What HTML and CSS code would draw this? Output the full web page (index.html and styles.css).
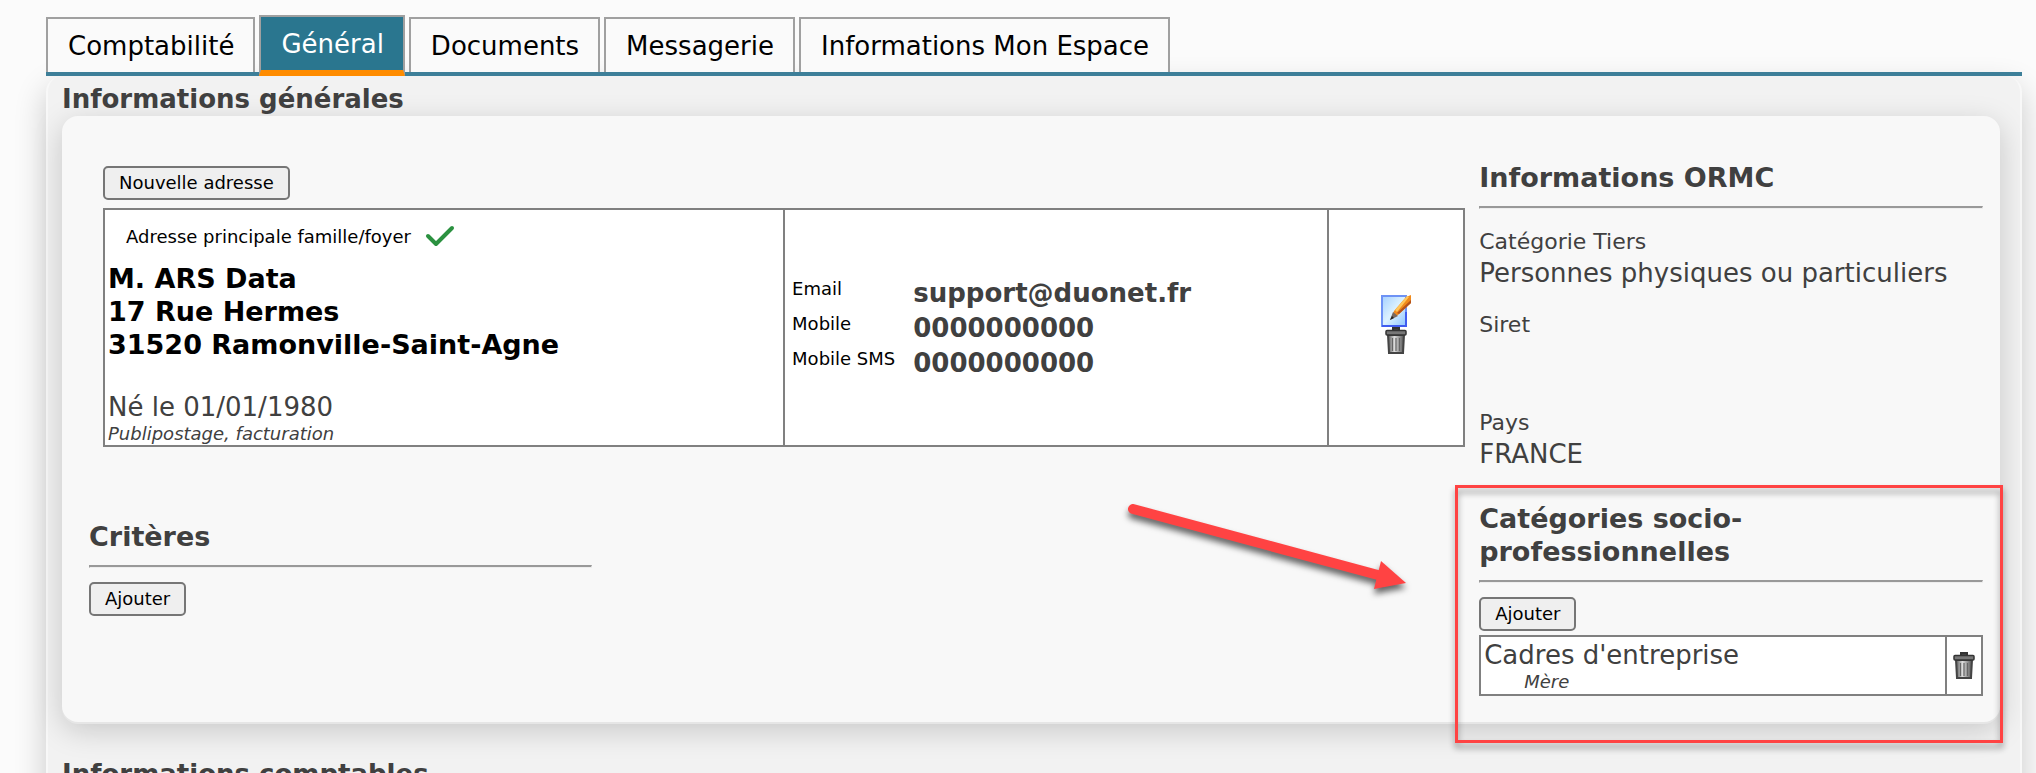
FILE: index.html
```html
<!DOCTYPE html>
<html lang="fr">
<head>
  <meta charset="UTF-8" />
  <meta name="viewport" content="width=device-width, initial-scale=1.0"/>
  <title>Fiche tiers</title>
  <link rel="stylesheet" href="styles.css">
</head>
<body>

  <svg class="defs" width="0" height="0" aria-hidden="true">
    <defs>
      <linearGradient id="bin" x1="0" x2="1" y1="0" y2="0">
        <stop offset="0" stop-color="#555"/>
        <stop offset="0.4" stop-color="#ddd"/>
        <stop offset="1" stop-color="#555"/>
      </linearGradient>
      <linearGradient id="sheet" x1="0" x2="1" y1="0" y2="1">
        <stop offset="0" stop-color="#a5d0ff"/>
        <stop offset="0.5" stop-color="#dcf2ff"/>
        <stop offset="1" stop-color="#8cc4ff"/>
      </linearGradient>
      <symbol id="trash" viewBox="0 0 24 28">
        <path d="M9 3V1h6v2" fill="#444" stroke="#333" stroke-width="2"/>
        <path d="M4 8h16l-1 18H5z" fill="url(#bin)" stroke="#444" stroke-width="2"/>
        <path d="M8.500 11v13M12 11v13M15.500 11v13" stroke="#666" stroke-width="1.200"/>
        <rect x="2" y="3.500" width="20" height="4.500" rx="1" fill="#777" stroke="#333" stroke-width="1.500"/>
      </symbol>
      <symbol id="edit" viewBox="0 0 30 32">
        <rect x="1" y="1" width="24" height="30" fill="url(#sheet)" stroke="#6d92f5" stroke-width="2"/>
        <path d="M1 31h24V17" fill="none" stroke="#3f5cf0" stroke-width="2"/>
        <path d="M10 24l3-8L25 2l5-2v8L17 20z" fill="#f08a1c"/>
        <path d="M14 15L26 1l2 1-12 15z" fill="#ffc65c"/>
        <path d="M18 19L30 8V5L16 18z" fill="#b4521c"/>
        <path d="M9 25l3-8 5 4z" fill="#7a6a60"/>
        <path d="M9 25l2-4 2 2z" fill="#222"/>
      </symbol>
    </defs>
  </svg>

  <nav class="tabs">
    <button class="tab">Comptabilité</button>
    <button class="tab active">Général</button>
    <button class="tab">Documents</button>
    <button class="tab">Messagerie</button>
    <button class="tab">Informations Mon Espace</button>
  </nav>

  <main class="panel">
    <h2>Informations générales</h2>
    <div class="card">
      <div class="left">
        <section class="addresses">
          <button class="btn">Nouvelle adresse</button>
          <table class="grid-table address-table">
            <tbody>
              <tr>
                <td class="col-address">
                  <div class="main-address">
                    <span>Adresse principale famille/foyer</span>
                    <svg class="check" viewBox="0 0 30 22" aria-hidden="true">
                      <path d="M3 11l8 8L27 3" fill="none" stroke="#2b9140" stroke-width="4" stroke-linecap="round" stroke-linejoin="round"/>
                    </svg>
                  </div>
                  <address>
                    M. ARS Data<br>
                    17 Rue Hermes<br>
                    31520 Ramonville-Saint-Agne
                  </address>
                  <div class="birth">Né le 01/01/1980</div>
                  <div class="note">Publipostage, facturation</div>
                </td>
                <td class="col-contact">
                  <dl class="contact">
                    <dt>Email</dt>
                    <dd>support@duonet.fr</dd>
                    <dt>Mobile</dt>
                    <dd>0000000000</dd>
                    <dt>Mobile SMS</dt>
                    <dd>0000000000</dd>
                  </dl>
                </td>
                <td class="col-actions">
                  <button class="icon-btn" aria-label="Modifier"><svg class="edit-icon"><use href="#edit"/></svg></button>
                  <button class="icon-btn" aria-label="Supprimer"><svg class="trash-icon"><use href="#trash"/></svg></button>
                </td>
              </tr>
            </tbody>
          </table>
        </section>

        <section class="criteria">
          <h3>Critères</h3>
          <hr>
          <button class="btn">Ajouter</button>
        </section>
      </div>

      <div class="right">
        <section>
          <h3>Informations ORMC</h3>
          <hr>
          <dl class="ormc">
            <dt>Catégorie Tiers</dt>
            <dd>Personnes physiques ou particuliers</dd>
            <dt>Siret</dt>
            <dd class="empty"></dd>
            <dt>Pays</dt>
            <dd>FRANCE</dd>
          </dl>
        </section>

        <section class="categories">
          <h3>Catégories socio-<br>professionnelles</h3>
          <hr>
          <button class="btn">Ajouter</button>
          <table class="grid-table category-table">
            <tbody>
              <tr>
                <td>
                  <div>Cadres d'entreprise</div>
                  <div class="note indent">Mère</div>
                </td>
                <td class="col-delete">
                  <button class="icon-btn" aria-label="Supprimer"><svg class="trash-icon"><use href="#trash"/></svg></button>
                </td>
              </tr>
            </tbody>
          </table>
          <div class="highlight"></div>
          <svg class="arrow" viewBox="0 0 300 110" aria-hidden="true">
            <path d="M13 14L258 80" stroke="#ff4343" stroke-width="10" stroke-linecap="round"/>
            <path d="M261 66l25 22-32 6z" fill="#ff4343"/>
          </svg>
        </section>
      </div>
    </div>

    <h2 class="next-title">Informations comptables</h2>
  </main>

</body>
</html>
```

FILE: styles.css
```css
* {
  box-sizing: border-box;
}

body {
  margin: 0;
  padding: 15px 14px 0 46px;
  height: 100vh;
  overflow: hidden;
  display: flex;
  flex-direction: column;
  font-family: Verdana, "DejaVu Sans", sans-serif;
  font-size: 26px;
  line-height: 33px;
  background: #fbfbfb;
  color: #404040;
}

.defs {
  position: absolute;
}

h2, h3 {
  margin: 0;
  font-size: 26px;
  font-weight: bold;
}

h3 {
  font-size: 27px;
}

hr {
  margin: 12px 0 14px;
  border: 1px solid #eee;
  border-top: 2px solid #999;
  border-left-color: #999;
}

/* tabs */
.tabs {
  display: flex;
  align-items: flex-end;
  gap: 4px;
  border-bottom: 4px solid #3d7f99;
  position: relative;
  z-index: 1;
}

.tab {
  padding: 11px 19px 9px 20px;
  border: 2px solid #a0a0a0;
  border-bottom: none;
  background: #fafafa;
  color: #000;
  font: inherit;
  cursor: pointer;
}

.tab.active {
  margin-bottom: -4px;
  border-bottom: 6px solid #ff8c00;
  background: #2a768f;
  color: #fff;
}

/* panel */
.panel {
  flex: 1 0 auto;
  padding: 7px 20px 40px 14px;
  border: 2px solid #f8f8f8;
  border-top: none;
  border-radius: 16px 16px 0 0;
  background: #f2f2f2;
  box-shadow: 0 12px 32px rgba(0, 0, 0, 0.2);
}

.card {
  display: flex;
  padding: 45px 17px 26px 27px;
  border-radius: 16px;
  background: #f8f8f8;
  box-shadow: 0 2px 0 #e6e6e6, 0 8px 30px rgba(0, 0, 0, 0.18);
}

.next-title {
  margin-top: 36px;
}

.left {
  flex: 1;
}

.right {
  width: 26.6%;
}

.btn {
  display: block;
  height: 34px;
  padding: 0 14px;
  border: 2px solid #767676;
  border-radius: 5px;
  background: #efefef;
  color: #000;
  font-family: inherit;
  font-size: 18px;
  line-height: 22px;
  cursor: pointer;
}

.btn:hover {
  background: #e5e5e5;
}

.grid-table {
  width: 100%;
  border-collapse: collapse;
  background: #fff;
  border: 2px solid #808080;
}

.grid-table td {
  padding: 2px 3px 1px;
  border: 2px solid #808080;
}

.note {
  font-size: 18px;
  line-height: 20px;
  font-style: italic;
}

.icon-btn {
  display: block;
  margin: 0 auto;
  padding: 0;
  border: none;
  background: none;
  cursor: pointer;
}

.icon-btn svg {
  display: block;
}

.edit-icon {
  width: 30px;
  height: 32px;
}

.trash-icon {
  width: 24px;
  height: 28px;
}

/* addresses */
.addresses {
  margin: 5px 14px 73px;
}

.address-table {
  margin-top: 8px;
  table-layout: fixed;
}

.col-address {
  width: 50%;
}

.col-contact {
  width: 40%;
}

.grid-table .col-actions {
  padding-bottom: 8px;
}

.main-address {
  display: flex;
  align-items: center;
  gap: 14px;
  height: 50px;
  padding: 0 0 2px 18px;
  font-size: 18px;
  color: #000;
}

.check {
  width: 30px;
  height: 22px;
}

address {
  margin-bottom: 30px;
  font-size: 27px;
  font-style: normal;
  font-weight: bold;
  color: #000;
}

.contact {
  display: grid;
  grid-template-columns: auto 1fr;
  column-gap: 18px;
  row-gap: 2px;
  margin: 0;
  padding-left: 4px;
}

.contact dt {
  font-size: 18px;
  line-height: 24px;
  color: #000;
}

.contact dd {
  margin: 0;
  font-weight: bold;
}

.criteria {
  width: 36.2%;
}

/* right column */
.ormc {
  margin: 17px 0 31px;
}

.ormc dt {
  font-size: 22px;
  line-height: 31px;
}

.ormc dd {
  margin: 0 0 19px;
}

.ormc dd:last-child {
  margin-bottom: 0;
}

.ormc .empty {
  height: 48px;
}

.categories {
  position: relative;
}

.category-table {
  margin-top: 4px;
}

.category-table td {
  padding-bottom: 2px;
}

.category-table .col-delete {
  width: 36px;
}

.indent {
  padding-left: 40px;
}

.highlight {
  position: absolute;
  top: -17px;
  right: -20px;
  bottom: -47px;
  left: -24px;
  border: 3px solid #ff4343;
  filter: drop-shadow(0 5px 3px rgba(0, 0, 0, 0.4));
  pointer-events: none;
}

.arrow {
  position: absolute;
  top: -7px;
  left: -359px;
  width: 300px;
  height: 110px;
  filter: drop-shadow(0 5px 3px rgba(0, 0, 0, 0.6));
  pointer-events: none;
}
```
